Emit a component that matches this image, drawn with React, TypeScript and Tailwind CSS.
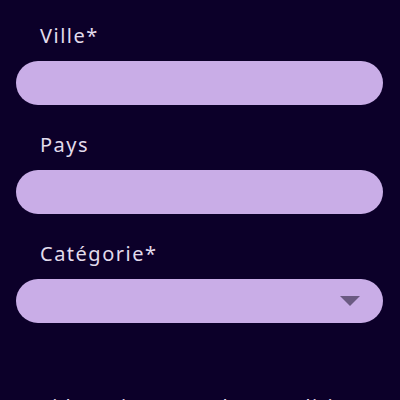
const fields = [
  { label: 'Ville*', select: false },
  { label: 'Pays', select: false },
  { label: 'Catégorie*', select: true },
];

function Field({ label, select }: { label: string; select: boolean }) {
  return (
    <div className="flex flex-col">
      <label className="pl-6 pt-[2px] text-[20px] leading-[28px] tracking-[1.5px] text-[#e2dcec] mb-[11px]">
        {label}
      </label>
      <div className="h-11 rounded-full bg-[#c9ade7] flex items-center justify-end pr-[23px]">
        {select && (
          <svg width="20" height="10" viewBox="0 0 20 10">
            <path d="M0 0 L20 0 L10 10 Z" fill="#6b5a82" />
          </svg>
        )}
      </div>
    </div>
  );
}

export default function App() {
  return (
    <div
      className="w-[400px] h-[400px] overflow-hidden bg-[#0c0029] px-4 pt-5"
      style={{ fontFamily: '"Noto Sans", sans-serif' }}
    >
      <div className="flex flex-col gap-6 w-[367px]">
        {fields.map((f) => (
          <Field key={f.label} label={f.label} select={f.select} />
        ))}
      </div>
      <p className="mt-[70px] text-center text-[20px] leading-[28px] tracking-[1.5px] text-[#e2dcec]">
        J'ai lu et j'accepte les conditions
      </p>
    </div>
  );
}
